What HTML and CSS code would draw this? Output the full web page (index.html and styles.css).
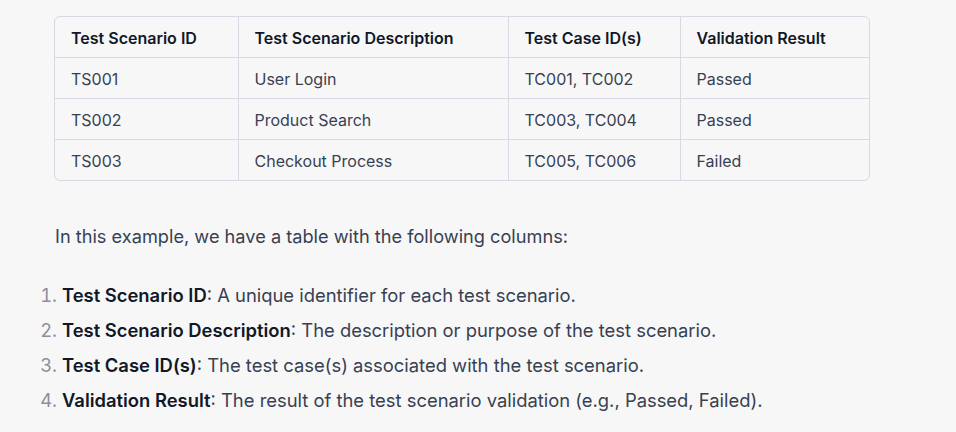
FILE: index.html
```html
<!DOCTYPE html>
<html>
<head>
<meta charset="utf-8">
<link rel="stylesheet" href="styles.css">
</head>
<body>
<div class="prose">
  <div class="table-wrap">
    <table class="grid">
      <colgroup>
        <col class="c1"><col class="c2"><col class="c3"><col class="c4">
      </colgroup>
      <thead>
        <tr><th>Test Scenario ID</th><th>Test Scenario Description</th><th>Test Case ID(s)</th><th>Validation Result</th></tr>
      </thead>
      <tbody>
        <tr><td>TS001</td><td>User Login</td><td>TC001, TC002</td><td>Passed</td></tr>
        <tr><td>TS002</td><td>Product Search</td><td>TC003, TC004</td><td>Passed</td></tr>
        <tr><td>TS003</td><td>Checkout Process</td><td>TC005, TC006</td><td>Failed</td></tr>
      </tbody>
    </table>
  </div>
  <p class="intro">In this example, we have a table with the following columns:</p>
  <ol class="cols">
    <li><strong>Test Scenario ID</strong>: A unique identifier for each test scenario.</li>
    <li><strong>Test Scenario Description</strong>: The description or purpose of the test scenario.</li>
    <li><strong>Test Case ID(s)</strong>: The test case(s) associated with the test scenario.</li>
    <li><strong>Validation Result</strong>: The result of the test scenario validation (e.g., Passed, Failed).</li>
  </ol>
</div>
</body>
</html>
```

FILE: styles.css
```css
html, body {
  margin: 0;
  padding: 0;
  background: #f7f7f8;
}
body {
  font-family: Inter, "Noto Sans", sans-serif;
  color: #374151;
  font-size: 18px;
}
.prose {
  padding: 16px 0 0 54px;
  width: 816px;
}
.table-wrap {
  border: 1px solid #d9d9e3;
  border-radius: 6px;
  overflow: hidden;
}
.grid {
  border-collapse: collapse;
  width: 100%;
  table-layout: fixed;
  font-size: 16px;
  line-height: 20px;
}
.c1 { width: 183px; }
.c2 { width: 270px; }
.c3 { width: 172px; }
.c4 { width: auto; }
.grid th, .grid td {
  text-align: left;
  padding: 11px 16px 9px 16px;
  border-left: 1px solid #d9d9e3;
  border-top: 1px solid #d9d9e3;
  height: 20px;
}
.grid th:first-child, .grid td:first-child { border-left: none; }
.grid thead th { border-top: none; font-weight: 600; color: #111827; }
.grid td { color: #374151; }
.intro {
  margin: 41px 0 0 1px;
  line-height: 28px;
  font-size: 18.2px;
}
.cols {
  margin: 31px 0 0 0;
  padding-left: 8px;
  line-height: 28px;
  font-size: 18.4px;
}
.cols li {
  margin: 0 0 7px 0;
  padding-left: 0;
}
.cols li::marker { color: #8e8ea0; }
.cols strong { font-weight: 600; color: #111827; }
```
